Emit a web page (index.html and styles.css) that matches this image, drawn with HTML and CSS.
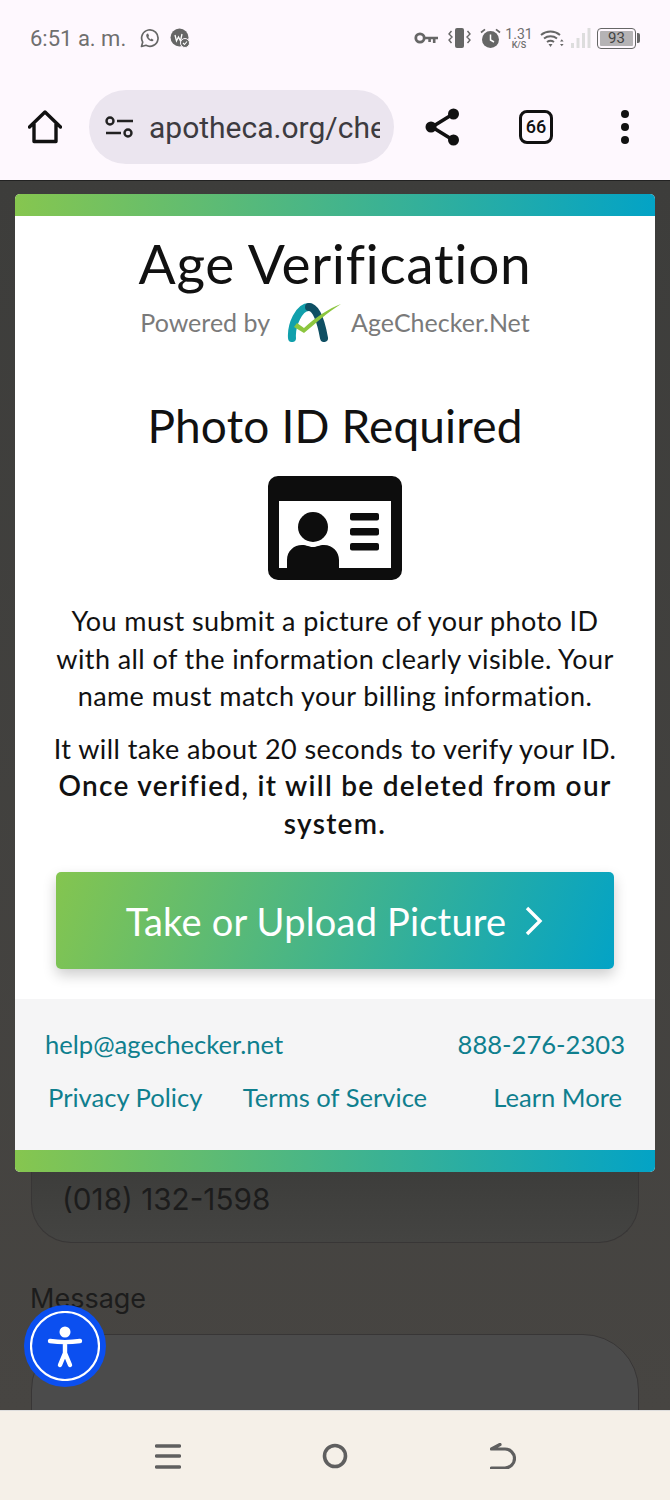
FILE: index.html
```html
<!DOCTYPE html>
<html lang="en">
<head>
    <meta charset="UTF-8">
    <meta name="viewport" content="width=device-width, initial-scale=1.0">
    <title>Age Verification</title>
    <link rel="stylesheet" href="styles.css">
</head>
<body>
    <!-- Status bar and browser toolbar -->
    <header class="top">
        <div class="status">
            <div class="status-left">
                <span class="time">6:51 a. m.</span>
                <svg class="ic-whatsapp" viewBox="0 0 20 20"><path d="M1.5 18.5l1.2-4.4A8.2 8.2 0 1 1 6 17.3z" fill="none" stroke="#666" stroke-width="1.7" stroke-linejoin="round"/><path d="M7 5.8c-1 .8-1 2.2-.2 3.6 1 1.8 2.4 3 4 3.6 1.2.4 2.3 0 2.8-1.1l-2-1.3-1 .8c-1-.5-1.8-1.3-2.3-2.3l.8-1-1-2.6z" fill="#666"/></svg>
                <svg class="ic-badge" viewBox="0 0 20 20"><circle cx="9.5" cy="9.5" r="9" fill="#666"/><path d="M5 7l1.5 6 2-4 2 4 1.5-7" fill="none" stroke="#fff" stroke-width="1.3"/><circle cx="15" cy="15" r="4.5" fill="#666" stroke="#fef8fe"/><path d="M13 15l1.5 1.5 2.5-3" fill="none" stroke="#fff" stroke-width="1.1"/></svg>
            </div>
            <div class="status-right">
                <svg class="ic-key" viewBox="0 0 24 14"><circle cx="6" cy="7" r="4.2" fill="none" stroke="#666" stroke-width="2.8"/><path d="M10 5.7h14v2.6h-2.5v3.7h-2.6V8.3h-2v2.7h-2.6V8.3H10z" fill="#666"/></svg>
                <svg class="ic-vibrate" viewBox="0 0 23 20"><rect x="7" y="0" width="9" height="20" rx="2" fill="#666"/><path d="M3.5 3L1 6l3 3-3 3 2.5 3M19.5 3L22 6l-3 3 3 3-2.5 3" fill="none" stroke="#666" stroke-width="1.4"/></svg>
                <svg class="ic-alarm" viewBox="0 0 21 21"><circle cx="10.5" cy="11.5" r="8.5" fill="#666"/><path d="M10.5 6.5V12l3.5 2" fill="none" stroke="#fff" stroke-width="1.5"/><path d="M1 4.5L5 1.3M20 4.5L16 1.3" stroke="#666" stroke-width="1.7"/></svg>
                <div class="speed"><span class="speed-num">1.31</span><span class="speed-unit">K/S</span></div>
                <svg class="ic-wifi" viewBox="0 0 24 20"><path d="M1 7a15 15 0 0 1 19 0M4 10.5a10.5 10.5 0 0 1 13 0M7 14a6 6 0 0 1 7 0" fill="none" stroke="#666" stroke-width="2"/><path d="M8.5 16h4l-2 3z" fill="#666"/><path d="M20 13.5l1.8-2.3 1.8 2.3zM20 16l1.8 2.3 1.8-2.3z" fill="#666"/></svg>
                <svg class="ic-signal" viewBox="0 0 20 20"><rect x="0" y="15" width="3" height="5" fill="#ddd"/><rect x="5.5" y="10" width="3" height="10" fill="#ddd"/><rect x="11" y="5" width="3" height="15" fill="#ddd"/><rect x="16.5" y="0" width="3" height="20" fill="#ddd"/></svg>
                <div class="battery"><div class="battery-body"><span class="battery-num">93</span></div><div class="battery-tip"></div></div>
            </div>
        </div>
        <div class="toolbar">
            <svg class="ic-home" viewBox="0 0 34 34"><path d="M1.5 17L17 2l15.5 15M6 14v17.5h22V14" fill="none" stroke="#111" stroke-width="3.4" stroke-linejoin="round" stroke-linecap="round"/></svg>
            <div class="url-pill">
                <svg class="ic-tune" viewBox="0 0 28 22"><circle cx="5" cy="5" r="3.5" fill="none" stroke="#222" stroke-width="2.4"/><path d="M12 5h16M1 17h15" stroke="#222" stroke-width="2.4"/><circle cx="23" cy="17" r="3.5" fill="none" stroke="#222" stroke-width="2.4"/></svg>
                <span class="url-text">apotheca.org/che</span>
            </div>
            <svg class="ic-share" viewBox="0 0 36 38"><path d="M28 6L7 19l21 13" fill="none" stroke="#111" stroke-width="3.6"/><circle cx="28.5" cy="6" r="5.5" fill="#111"/><circle cx="6" cy="19" r="5.5" fill="#111"/><circle cx="28.5" cy="32" r="5.5" fill="#111"/></svg>
            <div class="tabs">66</div>
            <div class="menu-dots"><i></i><i></i><i></i></div>
        </div>
    </header>

    <!-- Page behind the popup -->
    <main class="page">
        <div class="field-phone">(018) 132-1598</div>
        <div class="field-label">Message</div>
        <div class="field-message"></div>

        <!-- Popup -->
        <section class="modal">
            <div class="modal-bar"></div>
            <h1>Age Verification</h1>
            <div class="powered">
                <span>Powered by</span>
                <svg class="logo" viewBox="0 0 55 39">
                    <path d="M6 35C5 22 13 4 23 4" fill="none" stroke="#11a0ac" stroke-width="8" stroke-linecap="round"/>
                    <path d="M23 4c7 0 12 14 15 31" fill="none" stroke="#0f4f63" stroke-width="8" stroke-linecap="round"/>
                    <path d="M8 24l3-4 7 5C30 14 42 6 55 1 42 9 30 20 18 30z" fill="#8cc63f"/>
                </svg>
                <span class="powered-name">AgeChecker.Net</span>
            </div>
            <h2>Photo ID Required</h2>
            <svg class="id-icon" viewBox="0 0 134 104">
                <path fill-rule="evenodd" d="M10 0h114a10 10 0 0 1 10 10v84a10 10 0 0 1-10 10H10A10 10 0 0 1 0 94V10A10 10 0 0 1 10 0zM11 25v67h8v-8c0-9 7-15 15-15 5 0 7 2 11 2s6-2 11-2c9 0 15 7 15 15v8h52V25z" fill="#0d0d0d"/>
                <circle cx="45" cy="51" r="15" fill="#0d0d0d"/>
                <rect x="82" y="37" width="29" height="7.5" rx="2" fill="#0d0d0d"/>
                <rect x="82" y="52" width="29" height="7.5" rx="2" fill="#0d0d0d"/>
                <rect x="82" y="67" width="29" height="7.5" rx="2" fill="#0d0d0d"/>
            </svg>
            <p class="intro">You must submit a picture of your photo ID with all of the information clearly visible. Your name must match your billing information.</p>
            <p class="note">It will take about 20 seconds to verify your ID. <strong>Once verified, it will be deleted from our system.</strong></p>
            <button class="upload-btn" type="button">
                <span>Take or Upload Picture</span>
                <svg class="ic-chevron" viewBox="0 0 20 30"><path d="M3 2l13 13L3 28" fill="none" stroke="#fff" stroke-width="3.4"/></svg>
            </button>
            <footer class="modal-footer">
                <div class="footer-row">
                    <a href="#">help@agechecker.net</a>
                    <a href="#">888-276-2303</a>
                </div>
                <div class="footer-links">
                    <a href="#">Privacy Policy</a>
                    <a href="#">Terms of Service</a>
                    <a href="#">Learn More</a>
                </div>
            </footer>
            <div class="modal-bar"></div>
        </section>

        <!-- Accessibility button -->
        <div class="a11y-btn">
            <svg viewBox="0 0 70 70"><circle cx="35" cy="35" r="34" fill="none" stroke="#fff" stroke-width="2.2"/><circle cx="35" cy="21" r="5.5" fill="#fff"/><path d="M20 30c10 1.500 20 1.500 30 0M35 32v12M35 42l-5 12M35 42l5 12" fill="none" stroke="#fff" stroke-width="4.4" stroke-linecap="round"/></svg>
        </div>
    </main>

    <!-- Android nav bar -->
    <nav class="navbar">
        <svg class="ic-nav" viewBox="0 0 26 26"><path d="M1.5 3h23M1.5 13h23M1.5 24h23" stroke="#5f5f5f" stroke-width="3.4" stroke-linecap="round"/></svg>
        <svg class="ic-nav ic-nav-home" viewBox="0 0 26 26"><circle cx="13" cy="13" r="10.5" fill="none" stroke="#5f5f5f" stroke-width="3.6"/></svg>
        <svg class="ic-nav" viewBox="0 0 26 26"><path d="M1.5 25H15a9.5 9.5 0 0 0 0-19H1.5L10 1.5" fill="none" stroke="#5f5f5f" stroke-width="3.2" stroke-linecap="round" stroke-linejoin="round"/></svg>
    </nav>
</body>
</html>
```

FILE: styles.css
```css
:root {
    --top-bg: #fef8fe;
    --pill-bg: #ebe5ef;
    --status-color: #6f6f6f;
    --teal-text: #0f7f8e;
    --brand-gradient: linear-gradient(90deg, #86c64f, #03a3c6);
}

* {
    box-sizing: border-box;
}

body {
    margin: 0;
    width: 670px;
    height: 1500px;
    overflow: hidden;
    display: flex;
    flex-direction: column;
    font-family: 'Lato', sans-serif;
    background-color: #444;
}

/* Status bar + toolbar */
.top {
    height: 181px;
    flex: none;
    background-color: var(--top-bg);
    border-bottom: 1px solid #222;
}

.status {
    height: 76px;
    padding: 0 30px;
    display: flex;
    justify-content: space-between;
    align-items: center;
}

.status-left,
.status-right {
    display: flex;
    align-items: center;
}

.time {
    font-family: 'Roboto', sans-serif;
    font-size: 22px;
    color: var(--status-color);
    margin-right: 14px;
}

.ic-whatsapp {
    width: 20px;
    height: 20px;
    margin-right: 10px;
}

.ic-badge {
    width: 20px;
    height: 20px;
}

.ic-key { width: 24px; height: 14px; margin-right: 10px; }
.ic-vibrate { width: 23px; height: 20px; margin-right: 9px; }
.ic-alarm { width: 21px; height: 21px; margin-right: 6px; }
.ic-wifi { width: 24px; height: 20px; margin-right: 7px; }
.ic-signal { width: 20px; height: 20px; margin-right: 6px; }

.speed {
    width: 24px;
    margin-right: 9px;
    display: flex;
    flex-direction: column;
    align-items: center;
    color: var(--status-color);
    font-family: 'Roboto', sans-serif;
    line-height: 1;
}

.speed-num {
    font-size: 14px;
}

.speed-unit {
    font-size: 9px;
    font-weight: 500;
}

.battery {
    display: flex;
    align-items: center;
}

.battery-body {
    width: 39px;
    height: 21px;
    border: 1.5px solid #666;
    border-radius: 4px;
    padding: 2px;
    display: flex;
}

.battery-num {
    flex: 1;
    background-color: #b5b3b5;
    border-radius: 1px;
    font-family: 'Roboto', sans-serif;
    font-size: 15px;
    line-height: 14px;
    text-align: center;
    color: #444;
}

.battery-tip {
    width: 3px;
    height: 10px;
    background-color: #666;
    margin-left: 1px;
    border-radius: 0 2px 2px 0;
}

.toolbar {
    height: 102px;
    padding: 0 0 0 28px;
    display: flex;
    align-items: center;
}

.ic-home {
    width: 34px;
    height: 34px;
    margin-right: 27px;
}

.url-pill {
    width: 305px;
    height: 74px;
    border-radius: 37px;
    background-color: var(--pill-bg);
    padding-left: 16px;
    display: flex;
    align-items: center;
    margin-right: 31px;
}

.ic-tune {
    width: 28px;
    height: 22px;
    flex: none;
    margin-right: 16px;
}

.url-text {
    width: 231px;
    overflow: hidden;
    white-space: nowrap;
    font-family: 'Roboto', sans-serif;
    font-size: 30px;
    color: #3d3b40;
}

.ic-share {
    width: 36px;
    height: 38px;
    margin-right: 58px;
}

.tabs {
    width: 34px;
    height: 34px;
    border: 3.5px solid #111;
    border-radius: 8px;
    font-size: 18px;
    font-weight: 500;
    font-family: 'Roboto', sans-serif;
    line-height: 27px;
    text-align: center;
    color: #111;
    margin-right: 68px;
}

.menu-dots {
    display: flex;
    flex-direction: column;
    gap: 5px;
}

.menu-dots i {
    display: block;
    width: 8px;
    height: 8px;
    border-radius: 50%;
    background-color: #111;
}

/* Background page (dimmed) */
.page {
    position: relative;
    flex: 1;
    min-height: 0;
    overflow: hidden;
    padding: 971px 31px 0 31px;
    background: linear-gradient(180deg, #3d3d3b, #474542);
}

.field-phone {
    height: 91px;
    border: 1.5px solid #383636;
    border-top: none;
    border-radius: 0 0 40px 40px;
    padding: 23px 30px 0;
    font-family: 'Inter', sans-serif;
    font-size: 29.7px;
    line-height: 48px;
    color: #1c1c1c;
    background: linear-gradient(180deg, #3b3b39, #444442);
}

.field-label {
    margin: 36px 0 15px -1px;
    font-family: 'Inter', sans-serif;
    font-size: 27px;
    line-height: 40px;
    color: #1c1c1c;
}

.field-message {
    height: 140px;
    border: 1.5px solid #383636;
    border-radius: 56px 56px 0 0;
    background-color: #4b4b4b;
}

/* Popup */
.modal {
    position: absolute;
    top: 13px;
    left: 15px;
    width: 640px;
    border-radius: 5px;
    overflow: hidden;
    background-color: #fff;
    text-align: center;
    color: #111;
}

.modal-bar {
    height: 22px;
    background: var(--brand-gradient);
}

h1 {
    margin: 15px 0 0;
    font-size: 55px;
    font-weight: 400;
    letter-spacing: 0.65px;
    line-height: 64px;
}

.powered {
    height: 40px;
    margin-top: 7px;
    display: flex;
    justify-content: center;
    align-items: center;
    gap: 16px;
    font-size: 25px;
    color: #7a7a7a;
}

.powered-name {
    margin-left: -6px;
}

.logo {
    width: 55px;
    height: 39px;
}

h2 {
    margin: 57px 0 0;
    font-size: 46px;
    font-weight: 400;
    letter-spacing: 0.15px;
    line-height: 54px;
}

.id-icon {
    display: block;
    width: 134px;
    height: 104px;
    margin: 23px auto 0;
}

p {
    margin: 0 36px;
    font-size: 27px;
    letter-spacing: 0.42px;
    line-height: 37.5px;
}

.intro {
    margin-top: 22px;
}

.note {
    margin-top: 15px;
}

.note strong {
    font-size: 28px;
    font-weight: 600;
    letter-spacing: 1.3px;
}

.upload-btn {
    display: flex;
    justify-content: center;
    align-items: center;
    gap: 18px;
    width: 558px;
    height: 97px;
    margin: 30px 41px 0;
    border: none;
    border-radius: 5px;
    background: linear-gradient(110deg, #84c54f, #03a3c6);
    box-shadow: 0 6px 14px rgba(0, 0, 0, 0.2);
    color: #fff;
    font-family: inherit;
    font-size: 38px;
    letter-spacing: 0.2px;
}

.ic-chevron {
    width: 20px;
    height: 30px;
}

.modal-footer {
    margin-top: 30px;
    height: 151px;
    background-color: #f5f5f6;
    padding: 27px 30px 0;
}

.modal-footer a {
    color: var(--teal-text);
    text-decoration: none;
    font-size: 25.6px;
    line-height: 36px;
}

.footer-row {
    display: flex;
    justify-content: space-between;
}

.footer-links {
    margin-top: 17px;
    padding: 0 3px;
    display: grid;
    grid-template-columns: 1fr auto 1fr;
}

.footer-links a:last-child {
    justify-self: end;
}

.footer-links a:first-child {
    justify-self: start;
}

/* Accessibility widget */
.a11y-btn {
    position: absolute;
    left: 24px;
    top: 1124px;
    width: 82px;
    height: 82px;
    border-radius: 50%;
    background-color: #0b4ff0;
    padding: 6px;
}

.a11y-btn svg {
    display: block;
    width: 70px;
    height: 70px;
}

/* Nav bar */
.navbar {
    height: 90px;
    flex: none;
    background-color: #f5f0e8;
    border-top: 1px solid #ddd;
    display: flex;
    justify-content: space-between;
    align-items: center;
    padding: 0 154px 0 155px;
}

.ic-nav {
    width: 26px;
    height: 26px;
}

.ic-nav-home {
    margin-right: 2px;
}
```
